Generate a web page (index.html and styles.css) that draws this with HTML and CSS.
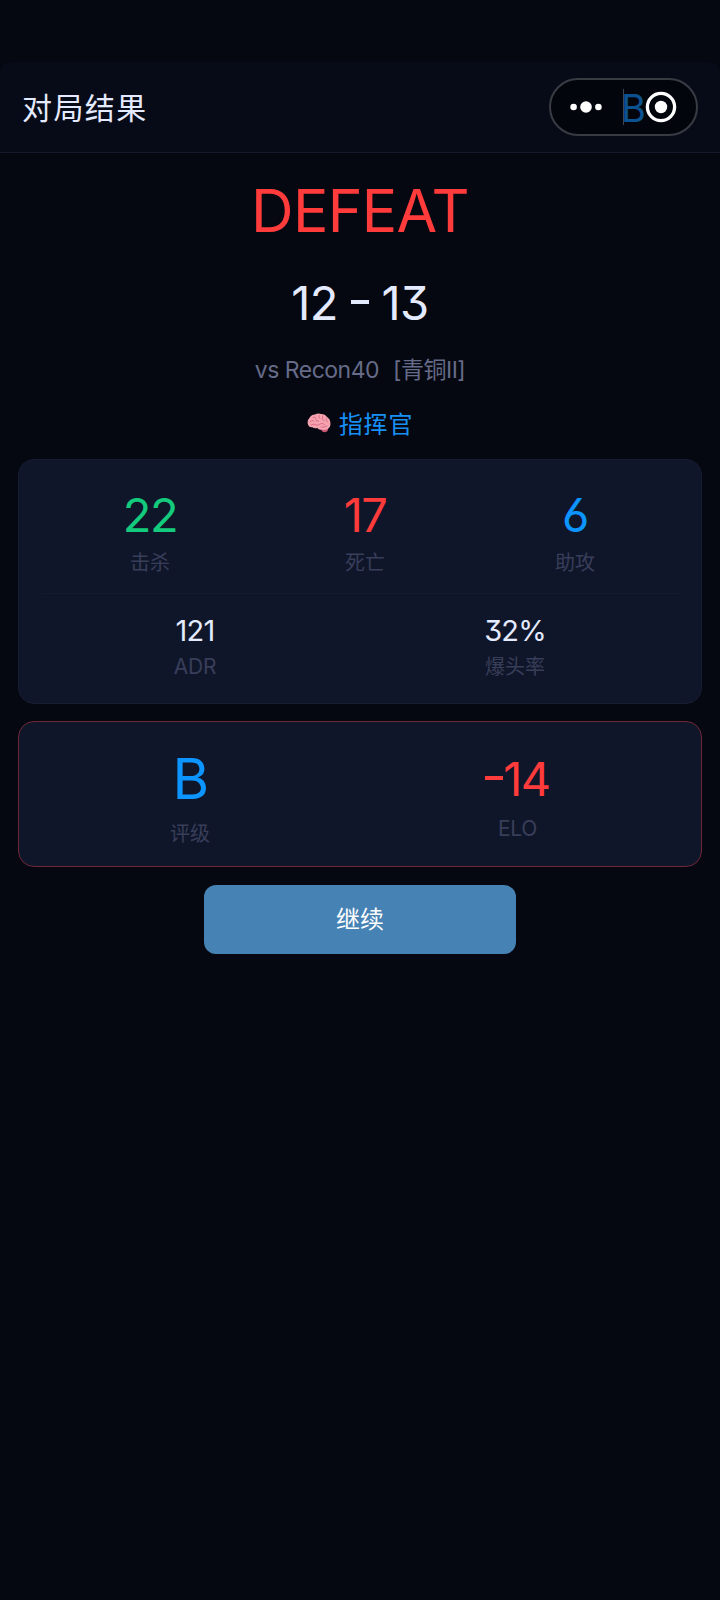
FILE: index.html
```html
<!DOCTYPE html>
<html lang="zh-CN">
<head>
  <meta charset="UTF-8">
  <title>对局结果</title>
  <link rel="stylesheet" href="styles.css">
</head>
<body>
  <header class="navbar">
    <h1>对局结果</h1>
    <div class="capsule">
      <svg class="dots" width="32" height="14" viewBox="0 0 32 14">
        <circle cx="3.6" cy="7" r="3.3"/>
        <circle cx="16" cy="7" r="5.8"/>
        <circle cx="28.4" cy="7" r="3.3"/>
      </svg>
      <span class="ghost-rank">B</span>
      <svg class="target" width="32" height="32" viewBox="0 0 32 32">
        <circle cx="16" cy="16" r="13.6" fill="none" stroke="#fff" stroke-width="3.3"/>
        <circle cx="16" cy="16" r="6.2"/>
      </svg>
    </div>
  </header>

  <main class="result">
    <h2 class="outcome">DEFEAT</h2>
    <div class="score">12 <span class="dash"></span> 13</div>
    <div class="opponent">vs Recon40<span class="tier">[青铜II]</span></div>
    <div class="role">
      <svg class="brain" width="24" height="20" viewBox="0 0 24 20">
        <path d="M13 15 L20 14 Q22 16 20.5 18 Q18 20.2 15.2 18.6 Z" fill="#c95873"/>
        <path d="M1.2 12 Q-.4 8 2.2 5.2 Q4 1.6 8 1.4 Q11-.2 14.2 1 Q18 1 20 4 Q23.6 6.3 23.4 10.5 Q23.8 14.6 20.4 16 Q17.5 17.4 15 16.6 Q11.5 17.4 10.4 15 Q7.4 16 5.4 14.2 Q2 14.6 1.2 12Z" fill="#f6a3b1"/>
        <path d="M3 9 Q5 6 7 8 M6 4.5 Q9 3 9 6.5 Q9 9 11.5 8 M12 2.5 Q11 5 13 5.5 M15.5 3 Q14.5 7 17 8 M19 5.5 Q18 7 20.5 9 M4 12 Q7 10 9 12 Q11 13 13 11 Q16 9 18 12 M14 14 Q17 15 20 13" fill="none" stroke="#d96f87" stroke-width="1" stroke-linecap="round"/>
      </svg>
      <span>指挥官</span>
    </div>

    <section class="card stats">
      <div class="row kda">
        <div class="cell"><div class="num green">22</div><div class="label">击杀</div></div>
        <div class="cell"><div class="num red">17</div><div class="label">死亡</div></div>
        <div class="cell"><div class="num blue">6</div><div class="label">助攻</div></div>
      </div>
      <div class="row extra">
        <div class="cell"><div class="num small">121</div><div class="label latin">ADR</div></div>
        <div class="cell"><div class="num small">32%</div><div class="label">爆头率</div></div>
      </div>
    </section>

    <section class="card rating">
      <div class="cell"><div class="num grade blue">B</div><div class="label">评级</div></div>
      <div class="cell"><div class="num elo red"><span class="dash"></span>14</div><div class="label latin">ELO</div></div>
    </section>

    <button class="continue">继续</button>
  </main>
</body>
</html>
```
FILE: styles.css
```css
* {
  box-sizing: border-box;
}

body {
  margin: 0;
  padding-top: 62px;
  min-height: 1600px;
  background-color: #050810;
  color: #e4eaff;
  font-family: Inter, "Noto Sans CJK SC", sans-serif;
  font-feature-settings: "cv03", "cv09";
}

.navbar {
  display: flex;
  justify-content: space-between;
  align-items: center;
  height: 91px;
  padding: 0 22px;
  background-color: #070b17;
  border-bottom: 1px solid #15192a;
  border-top-left-radius: 12px;
  border-top-right-radius: 12px;
}

.navbar h1 {
  margin: 0;
  padding-bottom: 2px;
  font: 400 30px/40px "Noto Sans CJK SC", sans-serif;
  letter-spacing: 1.4px;
}

.capsule {
  display: flex;
  align-items: center;
  width: 149px;
  height: 58px;
  margin-bottom: 1px;
  padding-left: 19px;
  border: 2px solid #393b43;
  border-radius: 29px;
  background-color: #03050d;
}

.capsule svg {
  fill: #fff;
}

.ghost-rank {
  width: 22px;
  height: 36px;
  margin-left: 21px;
  border-left: 1px solid #3c4652;
  font-size: 38px;
  line-height: 39px;
  text-indent: -3px;
  color: #0d5290;
}

.result {
  display: flex;
  flex-direction: column;
  align-items: center;
  padding: 23px 18px 0;
}

.outcome {
  height: 70px;
  margin: 0;
  font-size: 59px;
  font-weight: 400;
  line-height: 69px;
  letter-spacing: -0.7px;
  color: #ff3b3b;
}

.score {
  height: 56px;
  margin-top: 29px;
  font-size: 47px;
  line-height: 56px;
  letter-spacing: -0.5px;
}

.dash {
  display: inline-block;
  width: 18px;
  height: 4px;
  background-color: currentColor;
  vertical-align: 16px;
}

.opponent {
  height: 30px;
  margin-top: 25px;
  font-size: 23px;
  line-height: 29px;
  letter-spacing: -0.5px;
  color: #656b88;
}

.tier {
  margin-left: 14px;
}

.role {
  display: flex;
  align-items: center;
  gap: 8px;
  height: 30px;
  margin-top: 22px;
  font: 400 24px/28px "Noto Sans CJK SC", sans-serif;
  letter-spacing: 0.8px;
  color: #1890f5;
}

.card {
  width: 684px;
  background-color: #101629;
  border: 1px solid #171c31;
  border-radius: 16px;
}

.stats {
  height: 245px;
  margin-top: 21px;
  padding: 0 21px 0 23px;
}

.row {
  display: grid;
}

.kda {
  grid-template-columns: 216px 214px 206px;
  height: 134px;
  padding-top: 30px;
  border-bottom: 1px solid #151a2d;
}

.extra {
  grid-template-columns: 306px 334px;
  padding-top: 22px;
}

.cell {
  text-align: center;
}

.num {
  height: 50px;
  font-size: 47px;
  line-height: 50px;
  letter-spacing: -1.5px;
}

.num.small {
  height: 30px;
  font-size: 29px;
  line-height: 30px;
  letter-spacing: -0.8px;
}

.label {
  height: 24px;
  margin-top: 8px;
  font: 400 20px/24px "Noto Sans CJK SC", sans-serif;
  color: #383e5a;
}

.kda .label {
  margin-top: 10px;
}

.label.latin {
  font-family: Inter, sans-serif;
  font-size: 21px;
  line-height: 26px;
  letter-spacing: -0.3px;
}

.green {
  color: #14ca7c;
}

.red {
  color: #ff3b3b;
}

.blue {
  color: #0c94ff;
}

.rating {
  display: grid;
  grid-template-columns: 342px 313px;
  height: 146px;
  margin-top: 17px;
  padding-top: 29px;
  border-color: #702735;
}

.grade {
  height: 56px;
  font-size: 56px;
  line-height: 57px;
}

.elo {
  margin-top: 3px;
}

.rating .label {
  margin-top: 14px;
}

.rating .label.latin {
  margin-top: 12px;
}

.continue {
  width: 312px;
  height: 69px;
  margin-top: 18px;
  padding: 0 0 3px;
  border: none;
  border-radius: 12px;
  background-color: #4682b4;
  color: #fff;
  font: 400 24px/60px "Noto Sans CJK SC", sans-serif;
}
```
